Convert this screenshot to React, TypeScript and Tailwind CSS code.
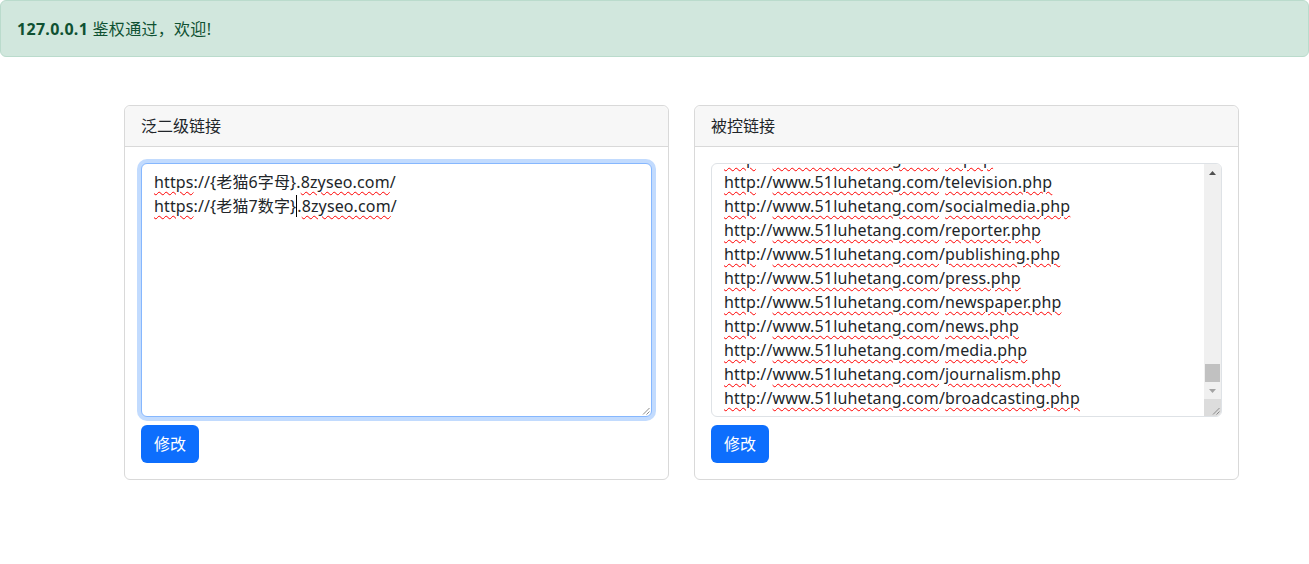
import React from "react";

const font = { fontFamily: '"Noto Sans", "Noto Sans CJK SC", sans-serif' };

function W({ children }: { children: React.ReactNode }) {
  return (
    <span className="underline decoration-wavy decoration-[#ff0000] decoration-1 underline-offset-[3px]">
      {children}
    </span>
  );
}

function UrlLine({ page }: { page: string }) {
  return (
    <div className="whitespace-nowrap">
      <W>http</W>://<W>www.51luhetang.com</W>/<W>{page}</W>
    </div>
  );
}

function Card({ title, children }: { title: string; children: React.ReactNode }) {
  return (
    <div className="w-[545px] rounded-[6px] border border-[#d9d9d9] bg-white">
      <div className="h-[41px] px-4 flex items-center bg-[#f7f7f7] border-b border-[#d9d9d9] rounded-t-[6px] text-[16px] text-[#212529]">
        {title}
      </div>
      <div className="p-4 flex flex-col gap-2">
        {children}
        <button className="self-start h-[38px] w-[58px] rounded-[6px] bg-[#0d6efd] text-white text-[16px]">
          修改
        </button>
      </div>
    </div>
  );
}

function Grip() {
  return (
    <svg width="8" height="8" viewBox="0 0 8 8" className="block">
      <line x1="7.5" y1="1" x2="1" y2="7.5" stroke="#8a8a8a" strokeWidth="1" />
      <line x1="7.5" y1="4.5" x2="4.5" y2="7.5" stroke="#8a8a8a" strokeWidth="1" />
    </svg>
  );
}

export default function App() {
  const pages = [
    "video.php",
    "tv.php",
    "television.php",
    "socialmedia.php",
    "reporter.php",
    "publishing.php",
    "press.php",
    "newspaper.php",
    "news.php",
    "media.php",
    "journalism.php",
    "broadcasting.php",
  ];
  return (
    <div className="min-h-[564px] bg-white text-[#212529]" style={font}>
      <div className="h-[57px] px-4 flex items-center bg-[#d1e7dd] border border-[#badbcc] rounded-[6px] text-[#0f5132] text-[16px] tracking-[0.3px]">
        <b className="font-bold">127.0.0.1</b>&nbsp;鉴权通过，欢迎!
      </div>
      <div className="pt-[48px] pl-[124px] flex gap-[25px]">
        <Card title="泛二级链接">
          <div className="relative h-[254px] rounded-[6px] border border-[#86b7fe] shadow-[0_0_0_4px_rgba(13,110,253,0.25)] bg-white px-3 py-[6px] text-[16px] leading-[24px] tracking-[0.12px]">
            <div className="whitespace-nowrap">
              <W>https</W>://{"{"}老猫6字母{"}"}.<W>8zyseo.com</W>/
            </div>
            <div className="whitespace-nowrap">
              <W>https</W>://{"{"}老猫7数字{"}"}
              <span className="border-l border-[#000]">.</span>
              <W>8zyseo.com</W>/
            </div>
            <div className="absolute right-[1px] bottom-[1px]">
              <Grip />
            </div>
          </div>
        </Card>
        <Card title="被控链接">
          <div className="h-[254px] rounded-[6px] border border-[#dee2e6] bg-white flex overflow-hidden text-[16px] leading-[24px] tracking-[0.15px]">
            <div className="flex-1 overflow-hidden flex flex-col justify-end px-3 pb-[6px]">
              {pages.map((p) => (
                <UrlLine key={p} page={p} />
              ))}
            </div>
            <div className="w-[17px] bg-[#f0f0f0] flex flex-col items-center">
              <div className="h-[17px] flex items-center justify-center">
                <svg width="7" height="4" viewBox="0 0 7 4">
                  <polygon points="3.5,0 7,4 0,4" fill="#505050" />
                </svg>
              </div>
              <div className="flex-1 w-full flex flex-col justify-end px-[1px]">
                <div className="h-[18px] w-full bg-[#c1c1c1]" />
              </div>
              <div className="h-[17px] flex items-center justify-center">
                <svg width="7" height="4" viewBox="0 0 7 4">
                  <polygon points="0,0 7,0 3.5,4" fill="#a3a3a3" />
                </svg>
              </div>
              <div className="h-[17px] w-full bg-[#dcdcdc] flex items-end justify-end p-[1px]">
                <Grip />
              </div>
            </div>
          </div>
        </Card>
      </div>
    </div>
  );
}
